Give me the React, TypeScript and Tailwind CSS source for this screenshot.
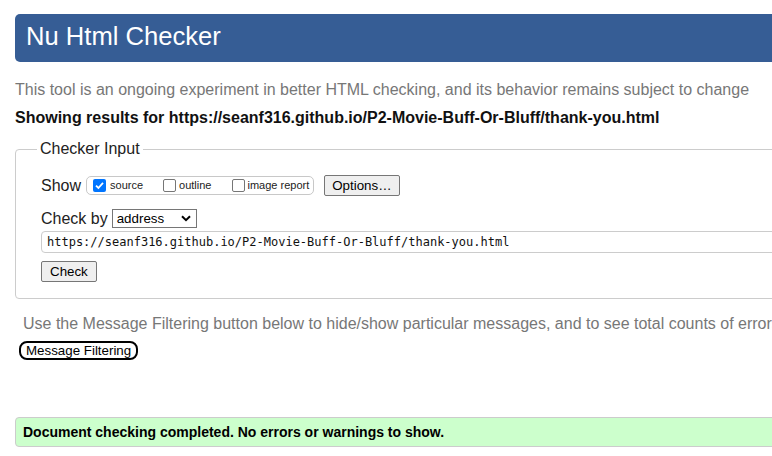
import React from "react";

function Checkbox({ checked }: { checked?: boolean }) {
  return (
    <span
      className={
        checked
          ? "block w-[13px] h-[13px] rounded-[2px] bg-[#0075ff] flex items-center justify-center shrink-0"
          : "block w-[13px] h-[13px] rounded-[2px] border border-[#767676] bg-white shrink-0"
      }
    >
      {checked && (
        <svg width="11" height="11" viewBox="0 0 11 11">
          <path d="M2 5.6 L4.4 8 L9 2.8" fill="none" stroke="white" strokeWidth="1.8" />
        </svg>
      )}
    </span>
  );
}

export default function App() {
  return (
    <div className="w-[772px] h-[456px] overflow-hidden bg-white font-['Liberation_Sans',Arial,sans-serif]">
      <div className="w-[1100px] pl-[15px] pt-[14px]">
        <div className="h-[48px] bg-[#365d95] rounded-l-[5px] pl-[11px] pt-[7px]">
          <h1 className="text-white text-[25.6px] leading-[30px] font-normal">Nu Html Checker</h1>
        </div>

        <p className="mt-[19px] text-[16px] leading-[18px] text-[#777777]">
          This tool is an ongoing experiment in better HTML checking, and its behavior remains subject to change
        </p>
        <p className="mt-[10px] text-[16px] leading-[18px] font-bold text-[#111]">
          Showing results for https://seanf316.github.io/P2-Movie-Buff-Or-Bluff/thank-you.html
        </p>

        <fieldset className="mt-[13px] border border-[#cccccc] rounded-[4px] pl-[21px] pb-[15px]">
          <legend className="px-[3px] text-[16px] leading-[18px] text-[#222]">Checker Input</legend>

          <div className="ml-[4px] mt-[17px] h-[21px] flex items-center">
            <span className="text-[16px] leading-[18px] text-[#222]">Show</span>
            <div className="ml-[5px] h-[19px] border border-[#c8c8c8] rounded-[5px] flex items-center pl-[6px] pr-[4px] text-[11px] text-[#222]">
              <Checkbox checked />
              <span className="ml-[4px]">source</span>
              <span className="ml-[20px]"><Checkbox /></span>
              <span className="ml-[3px]">outline</span>
              <span className="ml-[21px]"><Checkbox /></span>
              <span className="ml-[2px]">image report</span>
            </div>
            <button className="ml-[10px] h-[21px] px-[7px] border border-[#767676] rounded-[2px] bg-[#efefef] text-[13.333px] leading-[15px] text-black">
              Options…
            </button>
          </div>

          <div className="ml-[4px] mt-[13px] h-[19px] flex items-center">
            <span className="text-[16px] leading-[18px] text-[#222]">Check by</span>
            <div className="ml-[4px] w-[85px] h-[19px] border border-[#767676] bg-white flex items-center justify-between pl-[4px] pr-[5px] text-[13.333px] text-black">
              <span>address</span>
              <svg width="10" height="7" viewBox="0 0 10 7">
                <path d="M1 1.2 L5 5.2 L9 1.2" fill="none" stroke="black" strokeWidth="2" />
              </svg>
            </div>
          </div>

          <div className="ml-[4px] mt-[3px] h-[22px] border border-[#cccccc] rounded-l-[4px] flex items-center pl-[5px] font-['DejaVu_Sans_Mono',monospace] text-[12px] text-[#111]">
            https://seanf316.github.io/P2-Movie-Buff-Or-Bluff/thank-you.html
          </div>

          <button className="ml-[4px] mt-[8px] h-[21px] px-[8px] border border-[#767676] rounded-[2px] bg-[#efefef] text-[13.333px] leading-[15px] text-black">
            Check
          </button>
        </fieldset>

        <p className="mt-[16px] pl-[8px] text-[16px] leading-[18px] text-[#777777] whitespace-nowrap">
          Use the Message Filtering button below to hide/show particular messages, and to see total counts of errors and warnings.
        </p>
        <button className="ml-[4px] mt-[8px] h-[19px] px-[5px] border-2 border-black rounded-[8px] bg-white text-[13.333px] leading-[15px] text-black">
          Message Filtering
        </button>

        <div className="mt-[55px] h-[30px] border border-[#cccccc] rounded-l-[4px] bg-[#ccffcc] flex items-center pl-[7px] text-[14px] font-bold text-black">
          Document checking completed. No errors or warnings to show.
        </div>
      </div>
    </div>
  );
}
